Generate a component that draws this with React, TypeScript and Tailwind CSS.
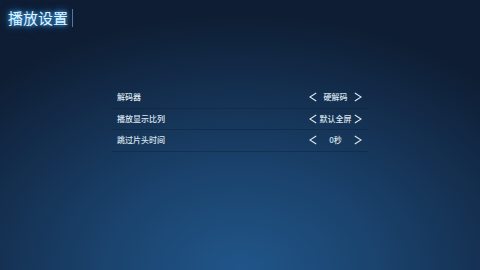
const rows = [
  { label: '解码器', value: '硬解码' },
  { label: '播放显示比列', value: '默认全屏' },
  { label: '跳过片头时间', value: '0秒' },
];

const Chevron = ({ dir }: { dir: 'left' | 'right' }) => (
  <svg width="8" height="10" viewBox="0 0 8 10" className="shrink-0">
    <path
      d={dir === 'left' ? 'M7.2 1 L0.9 5 L7.2 9' : 'M0.8 1 L7.1 5 L0.8 9'}
      fill="none"
      stroke="#dfe8f2"
      strokeWidth="1.1"
    />
  </svg>
);

const App = () => {
  return (
    <div
      className="w-[480px] h-[270px] overflow-hidden bg-[radial-gradient(ellipse_75%_95%_at_50%_100%,#21568a_0%,#1a426c_40%,#132c4b_75%,#0e1d33_100%)] text-[#dde6ef]"
      style={{ fontFamily: '"Noto Sans CJK SC", "Noto Sans", sans-serif' }}
    >
      <div className="flex items-center pl-[8px] pt-[9px]">
        <h1 className="text-[15px] leading-[18px] text-[#dff4ff] [text-shadow:0_0_4px_#4fb4ff,0_0_8px_#2a7fd0]">播放设置</h1>
        <div className="ml-[4px] w-[1px] h-[18px] bg-[#6f9cc4]/70" />
      </div>

      <div className="mt-[60px] ml-[112px] w-[256px]">
        {rows.map((r) => (
          <div key={r.label} className="flex items-center h-[21.5px] border-b border-[#0c1f36]/40 pl-[5px] pr-[6px]">
            <span className="flex-1 text-[8px] leading-none font-medium">{r.label}</span>
            <div className="flex items-center">
              <Chevron dir="left" />
              <span className="w-[37px] text-center text-[8px] leading-none font-medium">{r.value}</span>
              <Chevron dir="right" />
            </div>
          </div>
        ))}
      </div>
    </div>
  );
};

export default App;
